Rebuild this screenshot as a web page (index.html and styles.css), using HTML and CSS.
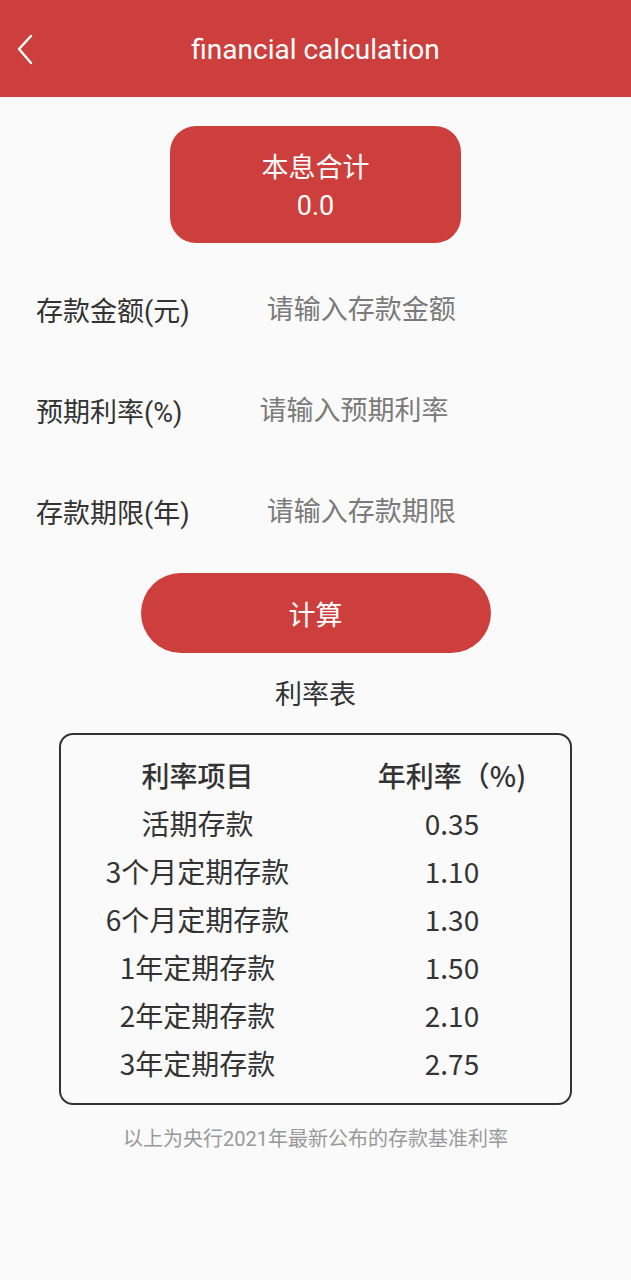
FILE: index.html
```html
<!DOCTYPE html>
<html>
<head>
  <title>financial calculation</title>
  <link rel="stylesheet" href="styles.css">
</head>
<body>
  <div class="topbar">
    <span class="back">
      <svg width="20" height="32" viewBox="0 0 20 32"><path d="M14 2 L2 15 L14 29" fill="none" stroke="#fff" stroke-width="2.4" stroke-linecap="round" stroke-linejoin="round"/></svg>
    </span>
    <span class="title">financial calculation</span>
    <span></span>
  </div>

  <div class="total">
    <div>本息合计</div>
    <div>0.0</div>
  </div>

  <div class="form">
    <div class="row">
      <span class="label">存款金额(元)</span>
      <input type="text" placeholder="请输入存款金额">
    </div>
    <div class="row">
      <span class="label">预期利率(%)</span>
      <input type="text" placeholder="请输入预期利率">
    </div>
    <div class="row">
      <span class="label">存款期限(年)</span>
      <input type="text" placeholder="请输入存款期限">
    </div>
  </div>

  <button class="calc">计算</button>

  <div class="caption">利率表</div>

  <div class="rates">
    <div class="head">利率项目</div><div class="head">年利率（%)</div>
    <div>活期存款</div><div>0.35</div>
    <div>3个月定期存款</div><div>1.10</div>
    <div>6个月定期存款</div><div>1.30</div>
    <div>1年定期存款</div><div>1.50</div>
    <div>2年定期存款</div><div>2.10</div>
    <div>3年定期存款</div><div>2.75</div>
  </div>

  <div class="note">以上为央行2021年最新公布的存款基准利率</div>
</body>
</html>
```

FILE: styles.css
```css
* {
  box-sizing: border-box;
  margin: 0;
  padding: 0;
}
body {
  background-color: #fafafa;
  font-family: Roboto, "Noto Sans CJK SC", sans-serif;
  color: #333;
}
.topbar {
  background-color: #cd3f3d;
  height: 97px;
  display: grid;
  grid-template-columns: 60px 1fr 60px;
  align-items: center;
  color: #fff;
}
.back {
  display: flex;
  padding-left: 17px;
  padding-top: 2px;
}
.title {
  text-align: center;
  font-size: 28px;
  padding-top: 2px;
}
.total {
  background-color: #cd3f3d;
  color: #fff;
  width: 291px;
  height: 117px;
  margin: 29px auto 0;
  padding-top: 4px;
  border-radius: 26px;
  display: flex;
  flex-direction: column;
  justify-content: center;
  align-items: center;
  font-size: 27px;
  line-height: 38px;
}
.form {
  margin-top: 16px;
  padding-left: 36px;
}
.row {
  height: 101px;
  display: flex;
  align-items: center;
  gap: 77px;
  font-size: 27px;
}
.label {
  color: #333;
}
.row input {
  flex: 1;
  border: none;
  background: transparent;
  font-family: Roboto, "Noto Sans CJK SC", sans-serif;
  font-size: 27px;
  outline: none;
  min-width: 0;
}
.row input::placeholder {
  color: #7a7a7a;
}
.calc {
  display: block;
  width: 350px;
  height: 80px;
  margin: 11px auto 0;
  border: none;
  border-radius: 40px;
  background-color: #cd3f3d;
  color: #fff;
  font-family: Roboto, "Noto Sans CJK SC", sans-serif;
  font-size: 27px;
}
.caption {
  text-align: center;
  font-size: 27px;
  line-height: 36px;
  margin-top: 24px;
}
.rates {
  width: 513px;
  margin: 20px auto 0;
  border: 2px solid #333;
  border-radius: 14px;
  padding: 16px 0;
  display: grid;
  grid-template-columns: 273px 1fr;
  font-family: "Noto Sans CJK SC", sans-serif;
  font-size: 28px;
  line-height: 48px;
  text-align: center;
  color: #333;
}
.rates .head {
  font-weight: 500;
}
.note {
  text-align: center;
  font-size: 20px;
  line-height: 28px;
  margin-top: 20px;
  color: #999;
}
```
